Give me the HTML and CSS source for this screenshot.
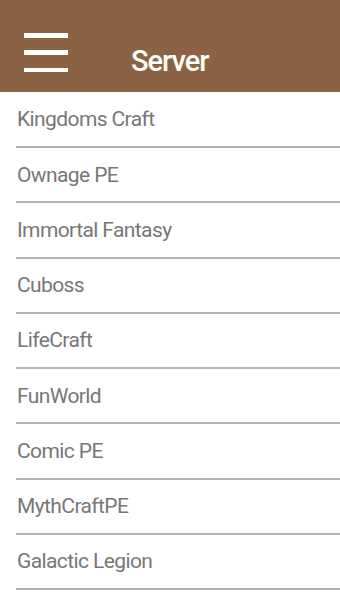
FILE: index.html
```html
<!DOCTYPE html>
<html lang="en">
<head>
    <meta charset="UTF-8">
    <meta name="viewport" content="width=device-width, initial-scale=1.0">
    <title>Server</title>
    <link rel="stylesheet" href="styles.css">
</head>
<body>

    <header class="topbar">
        <button class="menu-btn" aria-label="Menu">
            <span></span><span></span><span></span>
        </button>
        <h1>Server</h1>
    </header>

    <ul class="server-list">
        <li>Kingdoms Craft</li>
        <li>Ownage PE</li>
        <li>Immortal Fantasy</li>
        <li>Cuboss</li>
        <li>LifeCraft</li>
        <li>FunWorld</li>
        <li>Comic PE</li>
        <li>MythCraftPE</li>
        <li>Galactic Legion</li>
    </ul>

</body>
</html>
```

FILE: styles.css
```css
body { margin: 0; font-family: Roboto, "Liberation Sans", sans-serif; background: #fff; color: #777; }

.topbar { height: 92px; background: #8b6344; display: flex; align-items: center; padding: 13px 0 0 24px; box-sizing: border-box; }
.menu-btn { background: none; border: 0; padding: 0; width: 44px; height: 39px; display: flex; flex-direction: column; justify-content: space-between; }
.menu-btn span { display: block; height: 4.5px; background: #fff; }
.topbar h1 { margin: 18px 0 0 63px; color: #fff; font-size: 29px; line-height: 1; font-weight: 500; letter-spacing: -1px; }

.server-list { list-style: none; margin: 0; padding: 0 0 0 16px; }
.server-list li { height: 55.25px; box-sizing: border-box; border-bottom: 2px solid #b4b4b4; display: flex; align-items: center; padding-left: 1px; font-size: 21px; letter-spacing: -0.6px; }
.server-list li:first-child { height: 56px; }
```
